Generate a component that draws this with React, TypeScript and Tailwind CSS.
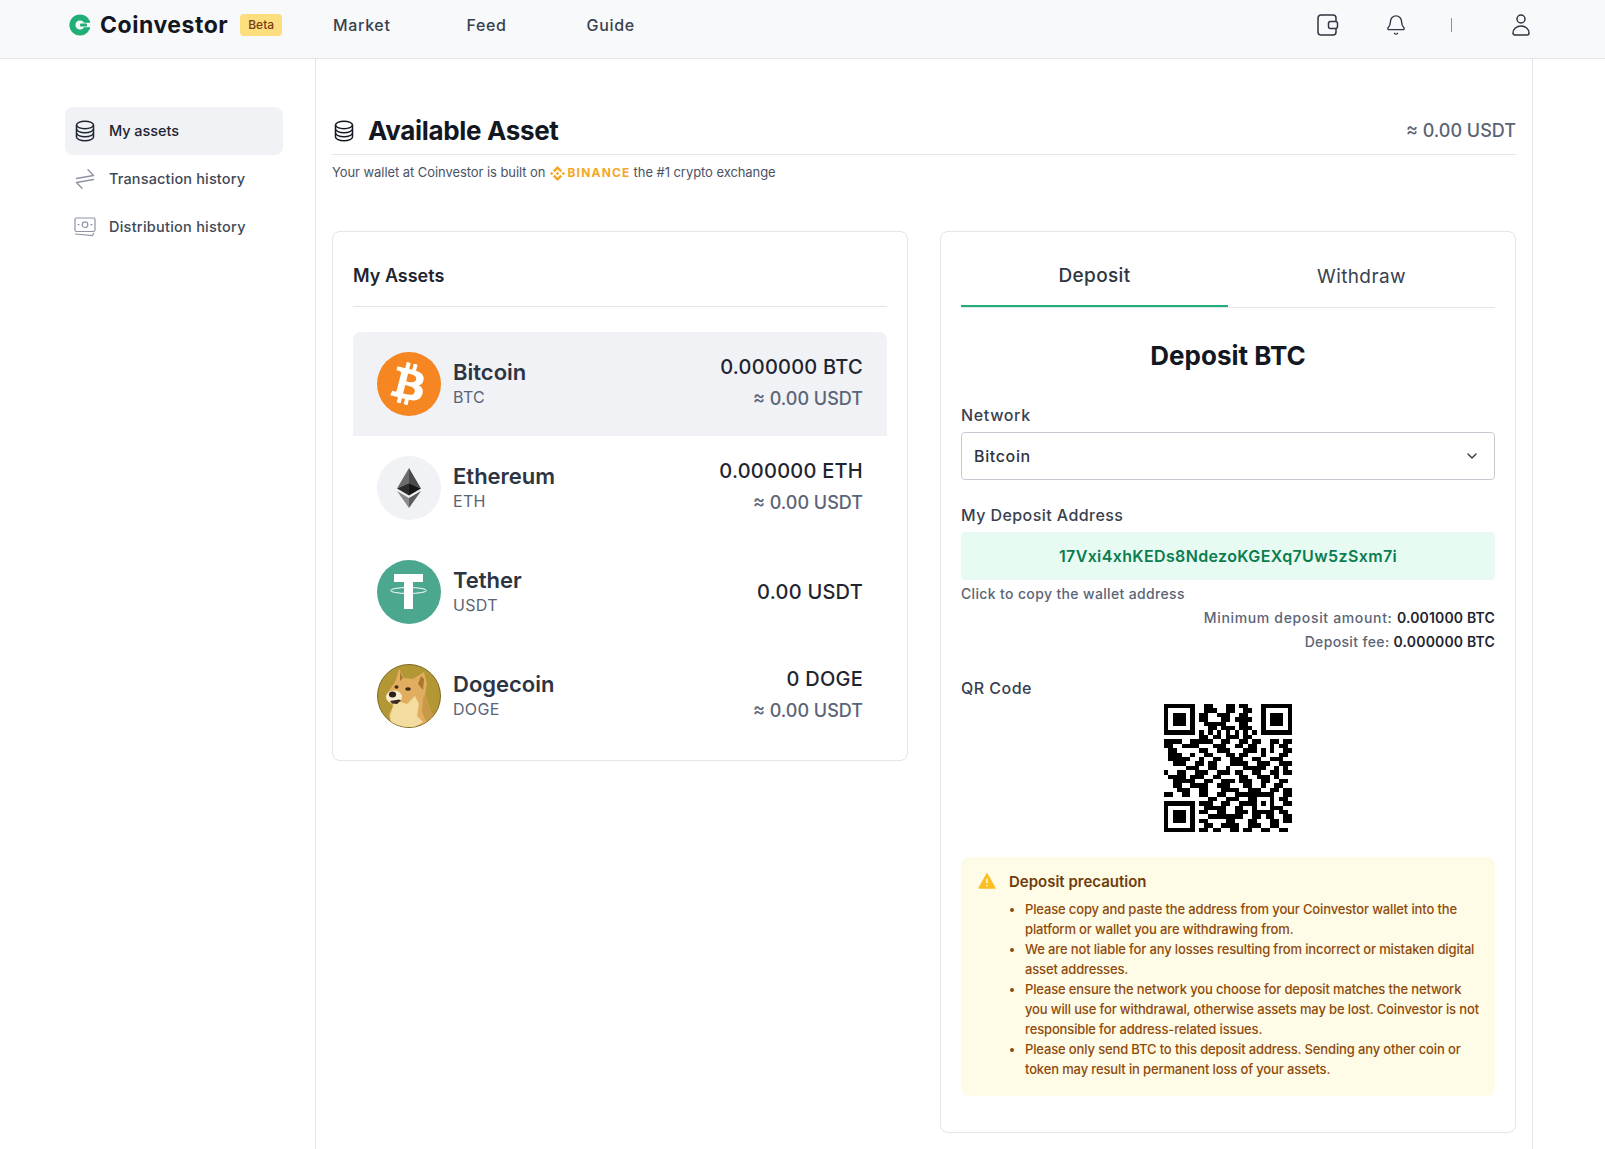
import { Bell, ChevronDown } from 'lucide-react';
import { FaBtc } from 'react-icons/fa';

const finder = ['1111111', '1000001', '1011101', '1011101', '1011101', '1000001', '1111111'];
const topMiddle = [
  '0110001101100',
  '0111001100110',
  '1100111001100',
  '1100011011110',
  '0111110001100',
  '0011011101110',
  '1010101010101',
];

const qrRows = [
  ...finder.map((row, i) => row + '0' + topMiddle[i] + '0' + row),
  '00000000' + '1101101110110' + '00000000',
  '11110011111001100110110011011',
  '11001111000111001101100010110',
  '01100000110011100011101010011',
  '01110010011000110110001000110',
  '01111100100110011100110011100',
  '00111001101100011110011100111',
  '00000111001100100011111001010',
  '10011001110011101100110011011',
  '01111011100110000110011101000',
  '00111110011001110111001100110',
  '00110011110011100011001001100',
  '00011100110001111001110011011',
  '11001100' + '110011001111' + '11111' + '0011',
  '00000000' + '001100111001' + '10001' + '0110',
  '11111110' + '111001100111' + '10101' + '0011',
  '10000010' + '011111001100' + '10001' + '1100',
  '10111010' + '110011001110' + '11111' + '0110',
  '10111010' + '001111111100110110011',
  '10111010' + '110000110001100011011',
  '10000010' + '011001111001110011000',
  '11111110' + '110110011011001100110',
];

function QrCode() {
  return (
    <svg viewBox="0 0 29 29" shapeRendering="crispEdges" className="h-32 w-32">
      {qrRows.map((row, y) =>
        row.split('').map((cell, x) =>
          cell === '1' ? <rect key={`${x}-${y}`} x={x} y={y} width="1" height="1" fill="#000" /> : null
        )
      )}
    </svg>
  );
}

function CoinStack({ className }: { className?: string }) {
  return (
    <svg viewBox="0 0 20 22" fill="none" stroke="currentColor" strokeWidth="1.5" className={className}>
      <ellipse cx="10" cy="5" rx="8.5" ry="3.7" />
      <path d="M1.5 5v12c0 2.1 3.8 3.8 8.5 3.8s8.5-1.7 8.5-3.8V5" />
      <path d="M1.5 9c0 2.1 3.8 3.8 8.5 3.8s8.5-1.7 8.5-3.8" />
      <path d="M1.5 13c0 2.1 3.8 3.8 8.5 3.8s8.5-1.7 8.5-3.8" />
    </svg>
  );
}

function Arrows({ className }: { className?: string }) {
  return (
    <svg viewBox="0 0 20 20" fill="none" stroke="currentColor" strokeWidth="1.4" strokeLinecap="round" strokeLinejoin="round" className={className}>
      <path d="M1.5 9.5 L18.5 6.5 L13 0.8" />
      <path d="M18.5 10.5 L1.5 13.5 L7 19.2" />
    </svg>
  );
}

function Banknote({ className }: { className?: string }) {
  return (
    <svg viewBox="0 0 22 20" fill="none" stroke="currentColor" strokeWidth="1.2" strokeLinecap="round" className={className}>
      <rect x="1" y="1" width="20" height="13.5" rx="1.5" />
      <circle cx="11" cy="7.7" r="2.8" />
      <path d="M4 7.7h1M17 7.7h1" />
      <path d="M1.5 17l17 1.5 1-2" />
    </svg>
  );
}

function BinanceMark() {
  return (
    <svg viewBox="0 0 126.6 126.6" fill="#f3a829" className="h-[15px] w-[15px]">
      <path d="M38.73 53.2l24.59-24.58 24.6 24.6 14.3-14.31L63.32 0 24.42 38.9l14.31 14.3zM0 63.31l14.3-14.31 14.31 14.31-14.31 14.3zm38.73 10.1l24.59 24.59 24.6-24.6 14.31 14.29-38.9 38.91-38.91-38.88-.02-.02 14.33-14.29zm59.27-10.1l14.3-14.31 14.3 14.3-14.3 14.31z" />
      <path d="M77.83 63.3L63.32 48.78 52.59 59.51l-1.24 1.23-2.54 2.54 14.51 14.5 14.51-14.47z" />
    </svg>
  );
}

function CoinLogo() {
  return (
    <svg viewBox="0 0 22 22" className="h-[22px] w-[22px]" fill="none">
      <circle cx="11" cy="11" r="7.6" stroke="#21ae77" strokeWidth="6" />
      <rect x="10" y="8.8" width="12" height="1.4" fill="#f8f9fb" />
      <rect x="10" y="11.8" width="12" height="1.4" fill="#f8f9fb" />
      <rect x="17" y="9" width="6" height="4" fill="#f8f9fb" />
      <rect x="11" y="9.5" width="7" height="3" rx="1" fill="#21ae77" />
    </svg>
  );
}

function WalletIcon() {
  return (
    <svg viewBox="0 0 22 22" fill="none" stroke="#2f3542" strokeWidth="1.5" className="h-[22px] w-[22px]">
      <path d="M19 7V4a3 3 0 0 0-3-3H4a3 3 0 0 0-3 3v14a3 3 0 0 0 3 3h12a3 3 0 0 0 3-3v-3" />
      <rect x="11.5" y="7.5" width="9" height="7" rx="2" />
    </svg>
  );
}

function UserIcon() {
  return (
    <svg viewBox="0 0 18 22" fill="none" stroke="#2f3542" strokeWidth="1.5" className="h-[22px] w-[18px]">
      <circle cx="9" cy="5" r="4" />
      <path d="M1 19c0-4 3.6-7 8-7s8 3 8 7c0 1.3-.8 2-2 2H3c-1.2 0-2-.7-2-2z" />
    </svg>
  );
}

function BtcIcon() {
  return (
    <div className="flex h-16 w-16 items-center justify-center rounded-full bg-[#f58621]">
      <FaBtc className="h-[42px] w-[42px] rotate-[14deg] text-white" />
    </div>
  );
}

function EthIcon() {
  return (
    <div className="flex h-16 w-16 items-center justify-center rounded-full bg-[#f0f2f6]">
      <svg viewBox="0 0 24 40" className="h-10 w-6">
        <polygon points="12,0 12,15 0,20.5" fill="#6b6b6b" />
        <polygon points="12,0 24,20.5 12,15" fill="#4a4a4a" />
        <polygon points="12,15 0,20.5 12,27.5" fill="#2b2b2b" />
        <polygon points="12,15 24,20.5 12,27.5" fill="#161616" />
        <polygon points="0,23 12,40 12,30" fill="#8a8a8a" />
        <polygon points="24,23 12,40 12,30" fill="#5c5c5c" />
      </svg>
    </div>
  );
}

function TetherIcon() {
  return (
    <svg viewBox="0 0 64 64" className="h-16 w-16">
      <circle cx="32" cy="32" r="32" fill="#4ba78d" />
      <rect x="17" y="14" width="29" height="8" fill="#fff" />
      <rect x="27" y="22" width="9" height="27" fill="#fff" />
      <ellipse cx="31.5" cy="30.5" rx="18" ry="3" fill="none" stroke="#fff" strokeWidth="1" />
    </svg>
  );
}

function DogeIcon() {
  return (
    <svg viewBox="0 0 64 64" className="h-16 w-16">
      <clipPath id="doge-clip">
        <circle cx="32" cy="32" r="31" />
      </clipPath>
      <circle cx="32" cy="32" r="31.5" fill="#b39734" stroke="#7c6a24" strokeWidth="1" />
      <g clipPath="url(#doge-clip)">
        <path d="M22 5l5 9 9 1 11-7 3 12-2 10 4 12 4 10-6 8-18 4-18-4-2-10 4-8-6-6 1-8 7-10 2-6z" fill="#e0ae5e" />
        <path d="M44 12l3 3-1 11-5-6zM23 8l3 6-3 3z" fill="#a9772f" />
        <path d="M18 36l12 4 8-8 4 8-2 12 6 6-14 8-18-4-1-10z" fill="#f3dca0" />
        <path d="M46 34l2-4 4 12 4 10-6 8-5-12z" fill="#c79a4a" />
        <ellipse cx="17" cy="33" rx="8" ry="6.5" fill="#f8ecce" />
        <ellipse cx="15.5" cy="30.5" rx="3.6" ry="3" fill="#2b2118" />
        <path d="M13 37l9-1.5 2 1-4 3.5-5-.5z" fill="#3d2a1c" />
        <ellipse cx="19.5" cy="23" rx="2" ry="1.7" fill="#3d2a1c" />
        <ellipse cx="31" cy="25" rx="2.8" ry="1.8" fill="#3d2a1c" />
      </g>
    </svg>
  );
}

const assets = [
  { name: 'Bitcoin', symbol: 'BTC', amount: '0.000000 BTC', usdt: '≈ 0.00 USDT', icon: <BtcIcon /> },
  { name: 'Ethereum', symbol: 'ETH', amount: '0.000000 ETH', usdt: '≈ 0.00 USDT', icon: <EthIcon /> },
  { name: 'Tether', symbol: 'USDT', amount: '0.00 USDT', usdt: '', icon: <TetherIcon /> },
  { name: 'Dogecoin', symbol: 'DOGE', amount: '0 DOGE', usdt: '≈ 0.00 USDT', icon: <DogeIcon /> },
];

export default function App() {
  return (
    <div className="min-w-[1605px] bg-white font-['Inter',sans-serif] text-[#131722]">
      <header className="flex h-[59px] items-center border-b border-[#e3e5ea] bg-[#f8f9fb] pb-2 pl-[69px] pr-[75px]">
        <CoinLogo />
        <span className="ml-[9px] text-[23px] font-bold tracking-[0.023em]">Coinvestor</span>
        <span className="ml-[12px] rounded-[4px] bg-[#fcde7e] px-2 py-[2px] text-[12px] font-medium text-[#7a3d12]">Beta</span>
        <nav className="ml-[51px] flex text-[16px] font-medium tracking-[0.04em] text-[#39414f]">
          <span>Market</span>
          <span className="ml-[76px]">Feed</span>
          <span className="ml-[80px]">Guide</span>
        </nav>
        <div className="ml-auto flex items-center">
          <WalletIcon />
          <Bell className="ml-[46px] h-[22px] w-[22px] text-[#2f3542]" strokeWidth={1.5} />
          <span className="ml-[44px] h-[14px] w-px bg-[#8a909c]" />
          <span className="ml-[60px]"><UserIcon /></span>
        </div>
      </header>

      <div className="flex">
        <aside className="w-[315px] shrink-0 pl-[65px] pr-[32px] pt-12 text-[14.5px] font-medium text-[#414957]">
          <div className="flex h-12 items-center gap-[14px] rounded-lg bg-[#f0f2f6] pl-[10px] text-[#1f2530]">
            <CoinStack className="h-[22px] w-5" />
            <span className="tracking-[-0.005em]">My assets</span>
          </div>
          <div className="flex h-12 items-center gap-[14px] pl-[10px]">
            <Arrows className="h-5 w-5 shrink-0 text-[#8d94a3]" />
            <span className="tracking-[0.01em]">Transaction history</span>
          </div>
          <div className="flex h-12 items-center gap-[13px] pl-[9px]">
            <Banknote className="h-5 w-[22px] shrink-0 text-[#8d94a3]" />
            <span className="tracking-[0.017em]">Distribution history</span>
          </div>
        </aside>

        <main className="w-[1218px] border-x border-[#e3e5ea] px-4 pb-4 pt-12">
          <div className="flex h-12 items-center border-b border-[#e3e5ea] pl-[2px]">
            <CoinStack className="h-[22px] w-5" />
            <h1 className="ml-[14px] text-[26px] font-bold tracking-[-0.013em]">Available Asset</h1>
            <span className="ml-auto text-[18px] font-medium text-[#5b6476]">≈ 0.00 USDT</span>
          </div>
          <div className="mt-2 flex h-5 items-center text-[13px] tracking-[-0.005em] text-[#4b5364]">
            <span>Your wallet at Coinvestor is built on</span>
            <span className="ml-[5px] mr-[2px]"><BinanceMark /></span>
            <span className="text-[12px] font-bold tracking-[0.1em] text-[#f3a829]">BINANCE</span>
            <span className="ml-[3px]">the #1 crypto exchange</span>
          </div>

          <div className="mt-12 grid grid-cols-2 items-start gap-8">
            <section className="rounded-lg border border-[#e3e5ea] px-5 pb-3">
              <div className="flex h-[75px] items-center border-b border-[#e3e5ea] pt-3 text-[18px] font-semibold text-[#1f2530]">My Assets</div>
              <div className="mt-[25px]">
                {assets.map((asset, index) => (
                  <div
                    key={asset.name}
                    className={`flex h-[104px] items-center px-6 ${index === 0 ? 'rounded-t-lg bg-[#f0f2f6]' : ''}`}
                  >
                    {asset.icon}
                    <div className="ml-3">
                      <div className="text-[22px] font-semibold leading-[26px] text-[#2d3543]">{asset.name}</div>
                      <div className="text-[16px] leading-6 tracking-[0.02em] text-[#5b6476]">{asset.symbol}</div>
                    </div>
                    <div className={`ml-auto text-right ${asset.usdt ? 'pb-[2px]' : ''}`}>
                      <div className="text-[20px] font-medium leading-[31px] tracking-[0.0125em] text-[#1f2530]">{asset.amount}</div>
                      {asset.usdt && <div className="text-[18px] font-medium leading-[31px] text-[#5b6476]">{asset.usdt}</div>}
                    </div>
                  </div>
                ))}
              </div>
            </section>

            <section className="rounded-lg border border-[#e3e5ea] px-5 pb-9">
              <div className="grid h-[76px] grid-cols-2 border-b border-[#e3e5ea] text-[19px] tracking-[0.02em]">
                <div className="flex items-center justify-center border-b-2 border-[#21ae77] pt-4 font-medium text-[#2d3543]">Deposit</div>
                <div className="flex items-center justify-center pt-4 font-normal text-[#39414f]">Withdraw</div>
              </div>
              <h2 className="mt-[30px] h-9 text-center text-[26px] font-bold leading-9">Deposit BTC</h2>
              <div className="mt-[29px] h-6 text-[16px] font-medium leading-6 tracking-[0.04em] text-[#39414f]">Network</div>
              <div className="mt-[5px] flex h-12 items-center justify-between rounded border border-[#c6cad2] px-3 text-[16px] font-medium tracking-[0.04em] text-[#2d3543]">
                <span>Bitcoin</span>
                <ChevronDown className="mr-[2px] h-4 w-4 text-[#2d3543]" strokeWidth={2} />
              </div>
              <div className="mt-[23px] h-6 text-[16px] font-medium leading-6 tracking-[0.027em] text-[#39414f]">My Deposit Address</div>
              <div className="mt-[5px] flex h-12 items-center justify-center rounded bg-[#e8fbf3] text-[16px] font-semibold tracking-[0.023em] text-[#0a7d4f]">17Vxi4xhKEDs8NdezoKGEXq7Uw5zSxm7i</div>
              <div className="mt-1 h-5 text-[14px] font-medium leading-5 tracking-[0.025em] text-[#5b6476]">Click to copy the wallet address</div>
              <div className="mt-1 h-5 text-right text-[14px] font-medium leading-5 tracking-[0.047em] text-[#5b6476]">
                Minimum deposit amount: <span className="font-semibold tracking-[0.012em] text-[#1f2530]">0.001000 BTC</span>
              </div>
              <div className="mt-1 h-5 text-right text-[14px] font-medium leading-5 tracking-[0.025em] text-[#5b6476]">
                Deposit fee: <span className="font-semibold tracking-[0.012em] text-[#1f2530]">0.000000 BTC</span>
              </div>
              <div className="mt-6 h-6 text-[16px] font-medium leading-6 tracking-[0.03em] text-[#39414f]">QR Code</div>
              <div className="mt-1 flex justify-center">
                <QrCode />
              </div>
              <div className="mt-[25px] flex gap-[13px] rounded-lg bg-[#fefbe6] pb-[17px] pl-[17px] pr-3 pt-[15px]">
                <svg viewBox="0 0 20 18" className="mt-[1px] h-[16px] w-[18px] shrink-0">
                  <path d="M10 1L19 17H1z" fill="#fbbf24" stroke="#fbbf24" strokeWidth="1.5" strokeLinejoin="round" />
                  <path d="M10 6.5v5M10 13.5v1.5" stroke="#fff" strokeWidth="1.6" />
                </svg>
                <div>
                  <div className="h-5 text-[15px] font-semibold leading-5 text-[#6e3d0c]">Deposit precaution</div>
                  <ul className="mt-[7px] list-disc whitespace-nowrap pl-4 text-[13px] font-medium leading-5 tracking-[-0.011em] text-[#8f4a0a]">
                    <li>Please copy and paste the address from your Coinvestor wallet into the<br />platform or wallet you are withdrawing from.</li>
                    <li>We are not liable for any losses resulting from incorrect or mistaken digital<br />asset addresses.</li>
                    <li>Please ensure the network you choose for deposit matches the network<br />you will use for withdrawal, otherwise assets may be lost. Coinvestor is not<br />responsible for address-related issues.</li>
                    <li>Please only send BTC to this deposit address. Sending any other coin or<br />token may result in permanent loss of your assets.</li>
                  </ul>
                </div>
              </div>
            </section>
          </div>
        </main>
      </div>
    </div>
  );
}
